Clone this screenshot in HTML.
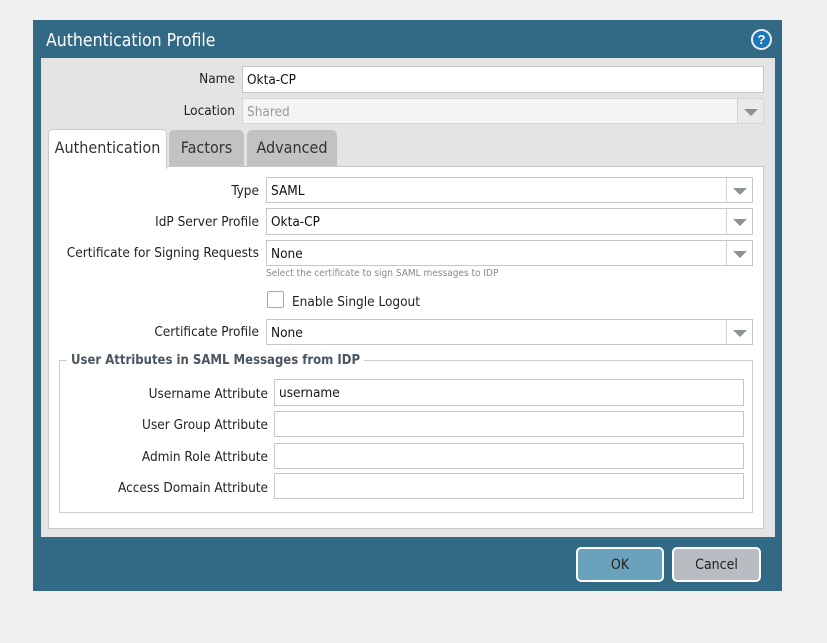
<!DOCTYPE html><html><head><style>
body{margin:0;width:827px;height:643px;background:#f0f0f0;font-family:"DejaVu Sans Condensed","Liberation Sans",sans-serif;position:relative;overflow:hidden}
.a{position:absolute}
.dlg{left:33px;top:20px;width:749px;height:571px;background:#326984}
.ttl{left:46px;top:31px;color:#fff;font-size:17.5px}
.pan{left:41px;top:58px;width:734px;height:479px;background:#e4e4e4}
.lb{font-size:13.5px;color:#222;text-align:right}
.in{background:#fff;border:1px solid #c6c6c6;box-sizing:border-box;font-size:13.5px;color:#111;padding:5px 0 0 4px}
.arr{position:absolute;right:0;top:0;width:26px;height:100%;border-left:1px solid #d0d0d0;box-sizing:border-box}
.arr:after{content:"";position:absolute;left:6px;top:10px;border-left:7px solid transparent;border-right:7px solid transparent;border-top:7px solid #8a9298}
.tab{font-size:16px;color:#333;text-align:center;box-sizing:border-box;border-radius:5px 5px 0 0;padding-top:8px}
.btn{border:2px solid #fff;border-radius:5px;box-sizing:border-box;font-size:14px;text-align:center;padding-top:8px;color:#222}
</style></head><body>
<div class="a dlg"></div>
<div class="a ttl">Authentication Profile</div>
<svg class="a" style="left:751px;top:29px" width="21" height="21" viewBox="0 0 21 21"><circle cx="10.5" cy="10.5" r="9.5" fill="#1a78b8" stroke="#e8eef2" stroke-width="2"/><text x="10.5" y="15" font-size="13" font-weight="bold" fill="#fff" text-anchor="middle" font-family="Liberation Sans">?</text></svg>
<div class="a pan"></div>
<div class="a lb" style="left:150px;top:71px;width:85px">Name</div>
<div class="a in" style="left:242px;top:66px;width:522px;height:27px">Okta-CP</div>
<div class="a lb" style="left:150px;top:103px;width:85px">Location</div>
<div class="a in" style="left:242px;top:98px;width:522px;height:26px;background:#f4f4f4;color:#999;border-color:#d6d6d6">Shared<div class="arr" style="background:#eaeaea"></div></div>
<div class="a tab" style="left:48px;top:129px;width:119px;height:40px;background:#fff;border:1px solid #c8c8c8;border-bottom:none;z-index:2">Authentication</div>
<div class="a tab" style="left:169px;top:130px;width:75px;height:36px;background:#c2c2c2">Factors</div>
<div class="a tab" style="left:247px;top:130px;width:90px;height:36px;background:#c2c2c2">Advanced</div>
<div class="a" style="left:48px;top:166px;width:716px;height:363px;background:#fff;border:1px solid #c8c8c8;box-sizing:border-box"></div>
<div class="a lb" style="left:60px;top:183px;width:199px">Type</div>
<div class="a in" style="left:266px;top:177px;width:487px;height:26px">SAML<div class="arr"></div></div>
<div class="a lb" style="left:60px;top:214px;width:199px">IdP Server Profile</div>
<div class="a in" style="left:266px;top:208px;width:487px;height:27px">Okta-CP<div class="arr"></div></div>
<div class="a lb" style="left:55px;top:245px;width:204px">Certificate for Signing Requests</div>
<div class="a in" style="left:266px;top:240px;width:487px;height:26px">None<div class="arr"></div></div>
<div class="a" style="left:266px;top:268px;font-size:10px;color:#888">Select the certificate to sign SAML messages to IDP</div>
<div class="a" style="left:267px;top:291px;width:17px;height:17px;border:1px solid #aaa;border-radius:2px;box-sizing:border-box"></div>
<div class="a" style="left:292px;top:294px;font-size:13.5px;color:#222">Enable Single Logout</div>
<div class="a lb" style="left:60px;top:324px;width:199px">Certificate Profile</div>
<div class="a in" style="left:266px;top:319px;width:487px;height:26px">None<div class="arr"></div></div>
<div class="a" style="left:59px;top:360px;width:694px;height:153px;border:1px solid #ccc;box-sizing:border-box"></div>
<div class="a" style="left:67px;top:353px;padding:0 4px;background:#fff;font-size:13px;font-weight:bold;color:#4a5560">User Attributes in SAML Messages from IDP</div>
<div class="a lb" style="left:70px;top:386px;width:198px">Username Attribute</div>
<div class="a in" style="left:274px;top:379px;width:470px;height:27px">username</div>
<div class="a lb" style="left:70px;top:417px;width:198px">User Group Attribute</div>
<div class="a in" style="left:274px;top:411px;width:470px;height:26px"></div>
<div class="a lb" style="left:70px;top:449px;width:198px">Admin Role Attribute</div>
<div class="a in" style="left:274px;top:443px;width:470px;height:26px"></div>
<div class="a lb" style="left:70px;top:480px;width:198px">Access Domain Attribute</div>
<div class="a in" style="left:274px;top:473px;width:470px;height:26px"></div>
<div class="a btn" style="left:576px;top:547px;width:88px;height:35px;background:#6aa2bb">OK</div>
<div class="a btn" style="left:672px;top:547px;width:89px;height:35px;background:#babcc3">Cancel</div>
</body></html>
